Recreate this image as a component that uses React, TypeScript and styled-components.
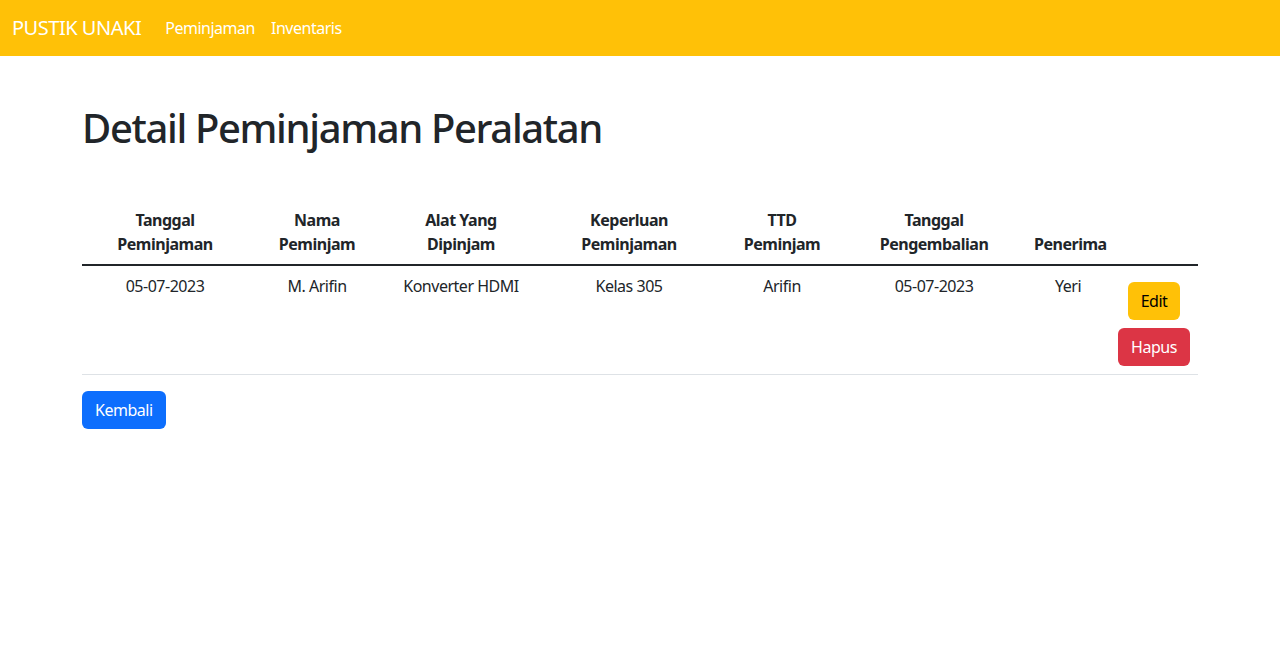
import React from "react";
import styled, { createGlobalStyle } from "styled-components";

const Global = createGlobalStyle`
  * { box-sizing: border-box; }
  body {
    margin: 0;
    font-family: "Noto Sans", "Liberation Sans", sans-serif;
    font-size: 16px;
    line-height: 1.5;
    letter-spacing: -0.03em;
    color: #212529;
    background: #fff;
  }
`;

const NavBar = styled.nav`
  background: #ffc107;
  padding: 8px 12px;
  display: flex;
  align-items: center;
  height: 56px;
`;

const Brand = styled.a`
  color: #fff;
  font-size: 20px;
  line-height: 30px;
  padding: 5px 0;
  margin-right: 16px;
  text-decoration: none;
`;

const NavList = styled.div`
  display: flex;
`;

const NavLink = styled.a`
  color: #fff;
  padding: 8px;
  text-decoration: none;
`;

const Container = styled.main`
  width: 1116px;
  margin: 48px auto 0;
`;

const Title = styled.h1`
  font-size: 40px;
  font-weight: 500;
  line-height: 1.2;
  letter-spacing: -0.034em;
  margin: 0 0 48px;
`;

const Table = styled.table`
  width: 100%;
  border-collapse: collapse;
  table-layout: fixed;
  margin-bottom: 16px;
  text-align: center;
`;

const Th = styled.th`
  padding: 8px;
  vertical-align: bottom;
  font-weight: 700;
  border-bottom: 2px solid #212529;
`;

const Td = styled.td`
  padding: 8px;
  vertical-align: top;
  border-bottom: 1px solid #dee2e6;
`;

const ActionCell = styled(Td)`
  padding: 8px 0;
`;

const Btn = styled.button<{ $variant: "warning" | "danger" | "primary"; $spaced?: boolean }>`
  display: inline-block;
  font-family: inherit;
  font-size: 16px;
  line-height: 24px;
  letter-spacing: inherit;
  padding: 6px 12px;
  border-radius: 6px;
  border: 1px solid transparent;
  cursor: pointer;
  margin: ${(p) => (p.$spaced ? "8px 0" : "0")};
  background: ${(p) =>
    p.$variant === "warning" ? "#ffc107" : p.$variant === "danger" ? "#dc3545" : "#0d6efd"};
  color: ${(p) => (p.$variant === "warning" ? "#000" : "#fff")};
`;

const ActionStack = styled.div`
  display: flex;
  flex-direction: column;
  align-items: center;
`;

const widths = [166, 138, 150, 186, 120, 184, 84, 88];

const headers: React.ReactNode[] = [
  <>Tanggal<br />Peminjaman</>,
  <>Nama<br />Peminjam</>,
  <>Alat Yang<br />Dipinjam</>,
  <>Keperluan<br />Peminjaman</>,
  <>TTD<br />Peminjam</>,
  <>Tanggal<br />Pengembalian</>,
  <>Penerima</>,
  <></>,
];

const row = ["05-07-2023", "M. Arifin", "Konverter HDMI", "Kelas 305", "Arifin", "05-07-2023", "Yeri"];

export default function App() {
  return (
    <>
      <Global />
      <NavBar>
        <Brand href="#">PUSTIK UNAKI</Brand>
        <NavList>
          <NavLink href="#">Peminjaman</NavLink>
          <NavLink href="#">Inventaris</NavLink>
        </NavList>
      </NavBar>
      <Container>
        <Title>Detail Peminjaman Peralatan</Title>
        <Table>
          <colgroup>
            {widths.map((w, i) => (
              <col key={i} style={{ width: w }} />
            ))}
          </colgroup>
          <thead>
            <tr>
              {headers.map((h, i) => (
                <Th key={i}>{h}</Th>
              ))}
            </tr>
          </thead>
          <tbody>
            <tr>
              {row.map((c, i) => (
                <Td key={i}>{c}</Td>
              ))}
              <ActionCell>
                <ActionStack>
                  <Btn $variant="warning" $spaced>Edit</Btn>
                  <Btn $variant="danger">Hapus</Btn>
                </ActionStack>
              </ActionCell>
            </tr>
          </tbody>
        </Table>
        <Btn $variant="primary">Kembali</Btn>
      </Container>
    </>
  );
}
